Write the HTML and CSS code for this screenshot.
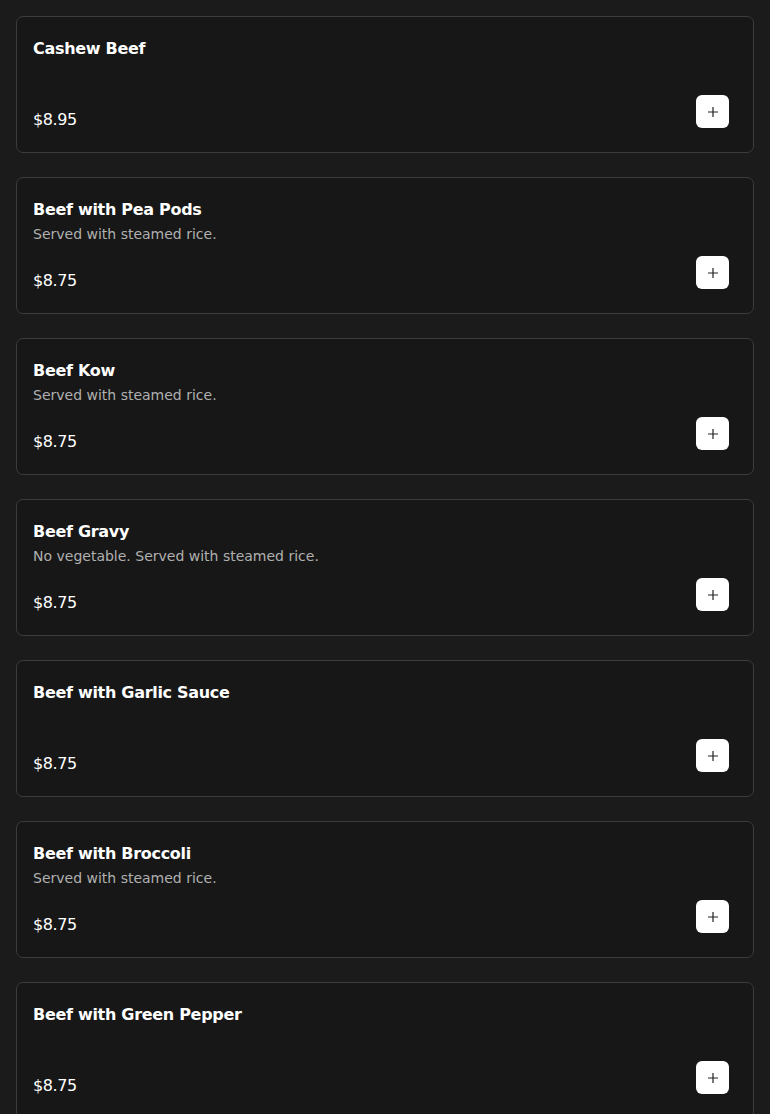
FILE: index.html
```html
<!DOCTYPE html>
<html lang="en">
<head>
<meta charset="utf-8">
<title>Menu</title>
<link rel="stylesheet" href="styles.css">
</head>
<body>
<main class="list">
  <article class="card">
    <div class="info">
      <h3 class="name">Cashew Beef</h3>
      <p class="desc"></p>
      <div class="price">$8.95</div>
    </div>
    <button class="add" aria-label="Add"><svg viewBox="0 0 12 12" width="12" height="12"><path d="M6 1v10M1 6h10" stroke="#222" stroke-width="1.2" fill="none"/></svg></button>
  </article>
  <article class="card">
    <div class="info">
      <h3 class="name">Beef with Pea Pods</h3>
      <p class="desc">Served with steamed rice.</p>
      <div class="price">$8.75</div>
    </div>
    <button class="add" aria-label="Add"><svg viewBox="0 0 12 12" width="12" height="12"><path d="M6 1v10M1 6h10" stroke="#222" stroke-width="1.2" fill="none"/></svg></button>
  </article>
  <article class="card">
    <div class="info">
      <h3 class="name">Beef Kow</h3>
      <p class="desc">Served with steamed rice.</p>
      <div class="price">$8.75</div>
    </div>
    <button class="add" aria-label="Add"><svg viewBox="0 0 12 12" width="12" height="12"><path d="M6 1v10M1 6h10" stroke="#222" stroke-width="1.2" fill="none"/></svg></button>
  </article>
  <article class="card">
    <div class="info">
      <h3 class="name">Beef Gravy</h3>
      <p class="desc">No vegetable. Served with steamed rice.</p>
      <div class="price">$8.75</div>
    </div>
    <button class="add" aria-label="Add"><svg viewBox="0 0 12 12" width="12" height="12"><path d="M6 1v10M1 6h10" stroke="#222" stroke-width="1.2" fill="none"/></svg></button>
  </article>
  <article class="card">
    <div class="info">
      <h3 class="name">Beef with Garlic Sauce</h3>
      <p class="desc"></p>
      <div class="price">$8.75</div>
    </div>
    <button class="add" aria-label="Add"><svg viewBox="0 0 12 12" width="12" height="12"><path d="M6 1v10M1 6h10" stroke="#222" stroke-width="1.2" fill="none"/></svg></button>
  </article>
  <article class="card">
    <div class="info">
      <h3 class="name">Beef with Broccoli</h3>
      <p class="desc">Served with steamed rice.</p>
      <div class="price">$8.75</div>
    </div>
    <button class="add" aria-label="Add"><svg viewBox="0 0 12 12" width="12" height="12"><path d="M6 1v10M1 6h10" stroke="#222" stroke-width="1.2" fill="none"/></svg></button>
  </article>
  <article class="card">
    <div class="info">
      <h3 class="name">Beef with Green Pepper</h3>
      <p class="desc"></p>
      <div class="price">$8.75</div>
    </div>
    <button class="add" aria-label="Add"><svg viewBox="0 0 12 12" width="12" height="12"><path d="M6 1v10M1 6h10" stroke="#222" stroke-width="1.2" fill="none"/></svg></button>
  </article>
</main>
</body>
</html>
```
FILE: styles.css
```css
html, body {
  margin: 0;
  padding: 0;
  background: #1b1b1b;
}
body {
  font-family: "DejaVu Sans", "Noto Sans", sans-serif;
  color: #ffffff;
}
.list {
  display: flex;
  flex-direction: column;
  gap: 24px;
  padding: 16px;
}
.card {
  display: flex;
  justify-content: space-between;
  align-items: flex-end;
  height: 137px;
  box-sizing: border-box;
  border: 1px solid #3c3c3c;
  border-radius: 7px;
  background: #171717;
  padding: 17px 23px 23px 16px;
}
.info {
  display: flex;
  flex-direction: column;
  align-self: stretch;
}
.name {
  margin: 0;
  font-size: 16px;
  font-weight: 700;
  line-height: 30px;
  letter-spacing: -0.3px;
}
.desc {
  margin: 0;
  min-height: 18px;
  font-size: 14px;
  line-height: 18px;
  color: #b0b0b0;
  font-weight: 400;
}
.price {
  margin-top: 26px;
  font-size: 16px;
  line-height: 24px;
  letter-spacing: -0.4px;
}
.add {
  width: 33px;
  height: 33px;
  border: 0;
  border-radius: 6px;
  background: #ffffff;
  display: flex;
  align-items: center;
  justify-content: center;
  padding: 0;
  margin-right: 1px;
  margin-bottom: 1px;
  cursor: pointer;
}
.add svg {
  display: block;
}
```
